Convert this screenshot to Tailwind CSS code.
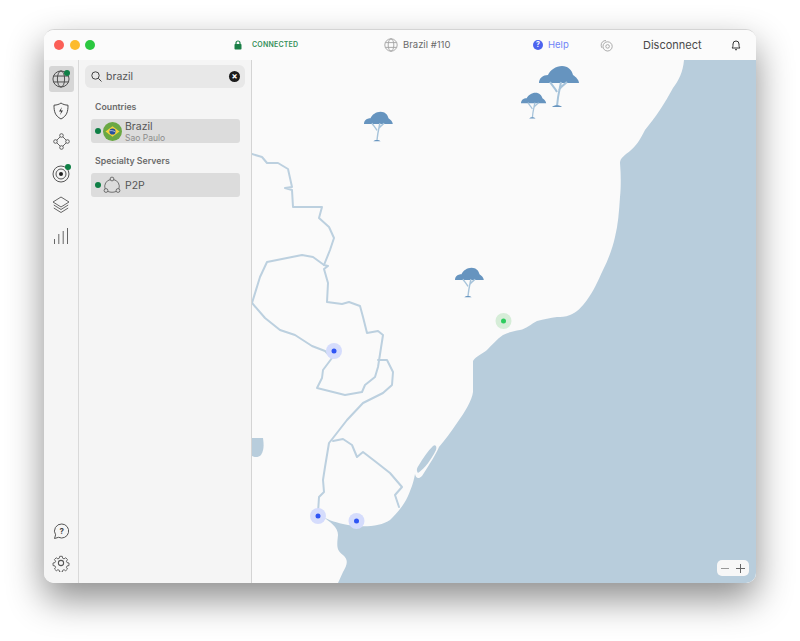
<!DOCTYPE html>
<html lang="en">
<head>
<meta charset="UTF-8">
<title>Brazil #110</title>
<script src="https://cdn.jsdelivr.net/npm/@tailwindcss/browser@4"></script>
</head>
<body class="bg-white w-[800px] h-[641px] overflow-hidden font-['Inter','Liberation_Sans',sans-serif]">
<div class="pl-[44px] pt-[29px]">
  <div class="w-[712px] h-[554px] rounded-[10px] overflow-hidden flex flex-col bg-white shadow-[0_16px_36px_rgba(0,0,0,0.45)] border-t border-[#d4d4d4]">

    <!-- title bar -->
    <div class="h-[30px] shrink-0 bg-[#fbfbfb] flex items-center">
      <div class="flex gap-[5.5px] ml-[10px] w-[180px]">
        <span class="w-[10px] h-[10px] rounded-full bg-[#fb5f57]"></span>
        <span class="w-[10px] h-[10px] rounded-full bg-[#fdbb2e]"></span>
        <span class="w-[10px] h-[10px] rounded-full bg-[#2bc840]"></span>
      </div>
      <svg class="w-[8px] h-[10px]" viewBox="0 0 8 10"><path d="M2 4.500V3a2 2 0 0 1 4 0v1.500" fill="none" stroke="#1a7f46" stroke-width="1.200"/><rect x="0.500" y="4" width="7" height="5.500" rx="0.800" fill="#1a7f46"/></svg>
      <span class="ml-[10px] mt-[1px] w-[132px] text-[7px] font-semibold tracking-[0.2px] text-[#35905a]">CONNECTED</span>
      <svg class="w-[14px] h-[14px]" viewBox="0 0 14 14" fill="none" stroke="#a3a3a3" stroke-width="0.900"><circle cx="7" cy="7" r="6.200"/><ellipse cx="7" cy="7" rx="2.800" ry="6.200"/><path d="M1.300 4.600h11.400M1.300 9.400h11.400"/></svg>
      <span class="ml-[5px] mt-[1px] w-[130px] text-[9.500px] text-[#6a6a6a]">Brazil #110</span>
      <span class="w-[10px] h-[10px] rounded-full bg-[#4c63ee] text-white text-[7px] font-bold leading-[10px] text-center">?</span>
      <span class="ml-[5px] mt-[1px] w-[52px] text-[9.500px] text-[#6f84f7]">Help</span>
      <svg class="w-[13px] h-[13px]" viewBox="0 0 13 13" fill="none" stroke="#a2a2a2" stroke-width="0.900"><path d="M6 1.600A4.400 4.400 0 0 0 1.200 6.400c0 1 .4 2 1 2.700"/><circle cx="7.600" cy="7.400" r="4.600"/><circle cx="7.600" cy="7.400" r="1.800"/></svg>
      <span class="ml-[30px] mt-[1px] w-[88px] text-[11px] text-[#4a4a4a]">Disconnect</span>
      <svg class="w-[10px] h-[12px]" viewBox="0 0 10 12" fill="none" stroke="#333" stroke-width="1"><path d="M1 9c1-1 1-2 1-4a3 3 0 0 1 6 0c0 2 0 3 1 4z" stroke-linejoin="round"/><path d="M4 10.700h2"/></svg>
    </div>

    <div class="flex flex-1 min-h-0">
      <!-- icon rail -->
      <div class="w-[35px] shrink-0 bg-[#f5f5f5] border-r border-[#d9d9d9] flex flex-col items-center pt-[6px] pb-[11px]">
        <div class="relative w-[25px] h-[26px] rounded-[3px] bg-[#d6d6d6] flex items-center justify-center">
          <svg class="w-[18px] h-[18px]" viewBox="0 0 17 17" fill="none" stroke="#4a4a4a" stroke-width="0.900"><circle cx="8.500" cy="8.500" r="7.600"/><ellipse cx="8.500" cy="8.500" rx="3.400" ry="7.600"/><path d="M1.400 5.700h14.200M1.400 11.300h14.200"/></svg>
          <span class="absolute right-[4px] top-[4px] w-[6px] h-[6px] rounded-full bg-[#0f7f45]"></span>
        </div>
        <svg class="mt-[10px] w-[16px] h-[18px]" viewBox="0 0 16 18" fill="none" stroke="#4a4a4a" stroke-width="1"><path d="M8 1c2 1.400 4 2 7 2.200 0 6-.8 10.500-7 13.800C1.800 13.700 1 9.200 1 3.200 4 3 6 2.400 8 1z" stroke-linejoin="round"/><path d="M9 5L6 9.500h2.200L7 13l3-4.500H7.800z" fill="#333" stroke="none"/></svg>
        <svg class="mt-[13px] w-[17px] h-[17px]" viewBox="0 0 17 17" fill="none" stroke="#555" stroke-width="0.900"><circle cx="8.500" cy="2.500" r="1.800"/><circle cx="2.500" cy="8.500" r="1.800"/><circle cx="14.500" cy="8.500" r="1.800"/><circle cx="8.500" cy="14.500" r="1.800"/><path d="M7.200 3.800L3.800 7.200M9.800 3.800l3.400 3.400M3.800 9.800l3.400 3.400M13.200 9.800l-3.400 3.400"/></svg>
        <div class="relative mt-[15px] w-[18px] h-[18px]">
          <svg class="w-[18px] h-[18px]" viewBox="0 0 18 18" fill="none" stroke="#555"><circle cx="9" cy="9" r="8" stroke-width="1"/><circle cx="9" cy="9" r="5" stroke-width="1"/><circle cx="9" cy="9" r="2" fill="#222" stroke="none"/></svg>
          <span class="absolute -right-[1px] -top-[1px] w-[6px] h-[6px] rounded-full bg-[#0f7f45]"></span>
        </div>
        <svg class="mt-[13px] w-[18px] h-[18px]" viewBox="0 0 18 18" fill="none" stroke="#555" stroke-width="0.900" stroke-linejoin="round"><path d="M9 1l8 5-8 5-8-5z"/><path d="M1.800 9L9 13.500 16.200 9M1.800 12L9 16.500 16.200 12"/></svg>
        <svg class="mt-[13px] w-[16px] h-[18px]" viewBox="0 0 16 18" fill="none" stroke="#666" stroke-width="1"><path d="M1.500 17v-5M5.800 17V7M10.200 17V4M14.500 17V1"/></svg>
        <svg class="mt-auto w-[17px] h-[17px]" viewBox="0 0 17 17" fill="none" stroke="#555" stroke-width="1"><path d="M8.800 1a7 7 0 1 1-3.200 13.300L1.500 15.500l1.100-3.700A7 7 0 0 1 8.800 1z" stroke-linejoin="round"/><text x="8.800" y="11" font-size="8" font-weight="700" fill="#444" stroke="none" text-anchor="middle" font-family="Inter">?</text></svg>
        <svg class="mt-[14px] w-[18px] h-[18px]" viewBox="0 0 24 24" fill="none" stroke="#555" stroke-width="1.400" stroke-linejoin="round"><circle cx="12" cy="12" r="3.500"/><path d="M10 1.500h4l.6 3 2.200 1 2.600-1.700 2.800 2.800-1.700 2.600 1 2.200 3 .6v4l-3 .6-1 2.200 1.700 2.600-2.800 2.800-2.600-1.700-2.200 1-.6 3h-4l-.6-3-2.200-1-2.600 1.700-2.800-2.800 1.700-2.600-1-2.200-3-.6v-4l3-.6 1-2.200L1.700 6.600l2.800-2.800 2.600 1.700 2.200-1z" transform="translate(1.800 1.800) scale(.85)"/></svg>
      </div>

      <!-- search panel -->
      <div class="w-[173px] shrink-0 bg-[#f5f5f5] border-r border-[#d4d4d4] pt-[5px] px-[6px]">
        <div class="h-[23px] rounded-[6px] bg-[#e8e8e8] flex items-center pl-[6px] pr-[5px] w-[160px]">
          <svg class="w-[11px] h-[11px]" viewBox="0 0 11 11" fill="none" stroke="#444" stroke-width="1"><circle cx="4.500" cy="4.500" r="3.700"/><path d="M7.300 7.300l3.200 3.200"/></svg>
          <span class="ml-[4px] text-[10.500px] text-[#555] flex-1">brazil</span>
          <span class="w-[11px] h-[11px] rounded-full bg-[#1c1c1c] text-white text-[9px] font-bold leading-[10px] text-center">×</span>
        </div>
        <div class="mt-[14px] ml-[10px] text-[8.750px] font-semibold text-[#6b6b6b] leading-[10px]">Countries</div>
        <div class="mt-[7px] ml-[6px] w-[149px] h-[24px] rounded-[3px] bg-[#dcdcdc] flex items-center pl-[4px]">
          <span class="w-[6px] h-[6px] rounded-full bg-[#0f7f45]"></span>
          <svg class="ml-[2px] w-[19px] h-[19px]" viewBox="0 0 19 19"><circle cx="9.500" cy="9.500" r="9.500" fill="#6aa843"/><path d="M9.500 4.300L16.500 9.500 9.500 14.700 2.500 9.500z" fill="#f3d23c"/><circle cx="9.500" cy="9.500" r="3.100" fill="#27509e"/><path d="M6.500 8.800c2-.5 4.300 0 6 1.200" stroke="#fff" stroke-width="0.600" fill="none"/></svg>
          <div class="ml-[3px] pt-[1px]">
            <div class="text-[10.500px] text-[#555] leading-[12px]">Brazil</div>
            <div class="text-[8.500px] text-[#8c8c8c] leading-[10px]">Sao Paulo</div>
          </div>
        </div>
        <div class="mt-[13px] ml-[10px] text-[8.750px] font-semibold text-[#6b6b6b] leading-[10px]">Specialty Servers</div>
        <div class="mt-[7px] ml-[6px] w-[149px] h-[24px] rounded-[3px] bg-[#dcdcdc] flex items-center pl-[4px]">
          <span class="w-[6px] h-[6px] rounded-full bg-[#0f7f45]"></span>
          <svg class="ml-[2px] w-[18px] h-[18px]" viewBox="0 0 18 18" fill="none" stroke="#555" stroke-width="0.800"><circle cx="9" cy="3" r="1.900"/><circle cx="3" cy="14.500" r="1.900"/><circle cx="15" cy="14.500" r="1.900"/><path d="M7.300 3.600A7 7 0 0 0 2.100 12.800M10.700 3.600a7 7 0 0 1 5.200 9.200M5 15.500c2.600 1 5.400 1 8 0"/></svg>
          <span class="ml-[4px] mt-[1px] text-[10.500px] text-[#555]">P2P</span>
        </div>
      </div>

      <!-- map -->
      <div class="relative flex-1 bg-[#fafafa]">
        <svg class="block w-full h-full" viewBox="252 60 504 523" fill="none">
          <defs>
            <g id="tree">
              <path d="M0 18C0 13 4 10 9 10C11 5 17 1 23 1C29 1 33 5 34 10C37 12 40 15 40 18Z" fill="#6694bf"/>
              <path d="M22 17c-1 6-3 12-4 24M11 17c2 3 5 6 7 10M28 17c-2 2-6 4-8 8" stroke="#a6c3da" stroke-width="2"/>
              <path d="M13 42c2-2.500 8-2.500 10 0z" fill="#6694bf"/>
            </g>
          </defs>
          <path d="M684 60C683 72 679 80 673 88C665 103 655 118 645 130C640 140 636 146 630 151C625 155 620 158 620 163C621 175 621 187 620 197C619 212 618 225 615 237C612 250 608 260 603 270C598 281 593 292 587 300C582 307 576 313 570 315C565 317 561 317 557 317C550 318 544 319 537 321C531 324 526 329 520 330C514 331 509 332 503 335C497 339 492 345 487 350C482 354 476 356 473 361L473 392C472 400 465 412 457 423C451 432 445 440 439 447C437 452 430 464 422 476C419 479 416 479 415 474C414 480 412 487 408 496C404 505 398 512 390 520C380 527 360 528 343 524C334 522 326 519 322 516C330 522 338 527 338 535C337 545 336 550 343 555C349 560 347 565 343 572L338 583H756V60Z" fill="#b8cddc"/>
          <path d="M433 446C436 444 437 447 436 450C431 460 425 468 418 473C416 470 417 468 419 465C423 458 428 451 433 446Z" fill="#b8cddc"/>
          <path d="M252 438L263 438C264 445 264 450 261 455C258 458 254 457 252 456Z" fill="#b8cddc"/>
          <g stroke="#bcd0df" stroke-width="2" stroke-linejoin="round" stroke-linecap="round">
            <path d="M252 154L262 157L267 163L278 163L288 169L292 187L285 188L292 190L293 207L322 207L319 218L329 227L334 238L330 250L324 265L328 266L324 269L328 283L327 302L342 304L349 302L360 306L363 317L367 333L378 331L383 335L378 367L375 377L365 385L362 392L345 395L317 388L322 378L323 370L332 358L325 351L312 346L295 335L280 330L265 318L252 303"/>
            <path d="M252 303L260 277L267 262L302 255L313 257L324 265"/>
            <path d="M378 360L387 360L393 372L392 385L383 393L363 403L347 420L333 438L329 443L325 467L323 480L324 492L319 497L318 513"/>
            <path d="M333 441L343 439L352 445L357 457L363 452L376 462L390 473L402 487L395 495L399 507"/>
          </g>
          <use href="#tree" transform="translate(539 65)"/>
          <use href="#tree" transform="translate(521 92) scale(0.63)"/>
          <use href="#tree" transform="translate(364 111) scale(0.72)"/>
          <use href="#tree" transform="translate(455 267) scale(0.72)"/>
          <g>
            <circle cx="503.500" cy="321" r="8" fill="#d6edd8"/><circle cx="503.500" cy="321" r="2.500" fill="#2ecc5f"/>
            <circle cx="334" cy="351" r="8" fill="#d5dcfc"/><circle cx="334" cy="351" r="2.500" fill="#2f55f5"/>
            <circle cx="318" cy="516" r="8" fill="#d5dcfc"/><circle cx="318" cy="516" r="2.500" fill="#2f55f5"/>
            <circle cx="356.500" cy="521" r="8" fill="#d5dcfc"/><circle cx="356.500" cy="521" r="2.500" fill="#2f55f5"/>
          </g>
        </svg>
        <div class="absolute right-[7px] bottom-[7px] w-[32px] h-[16px] rounded-[5px] bg-[#f7f7f7] flex items-center justify-center gap-[7px]">
          <span class="w-[8px] h-[1px] bg-[#999]"></span>
          <svg class="w-[9px] h-[9px]" viewBox="0 0 9 9" stroke="#666"><path d="M0 4.500h9M4.500 0v9"/></svg>
        </div>
      </div>
    </div>
  </div>
</div>
</body>
</html>
